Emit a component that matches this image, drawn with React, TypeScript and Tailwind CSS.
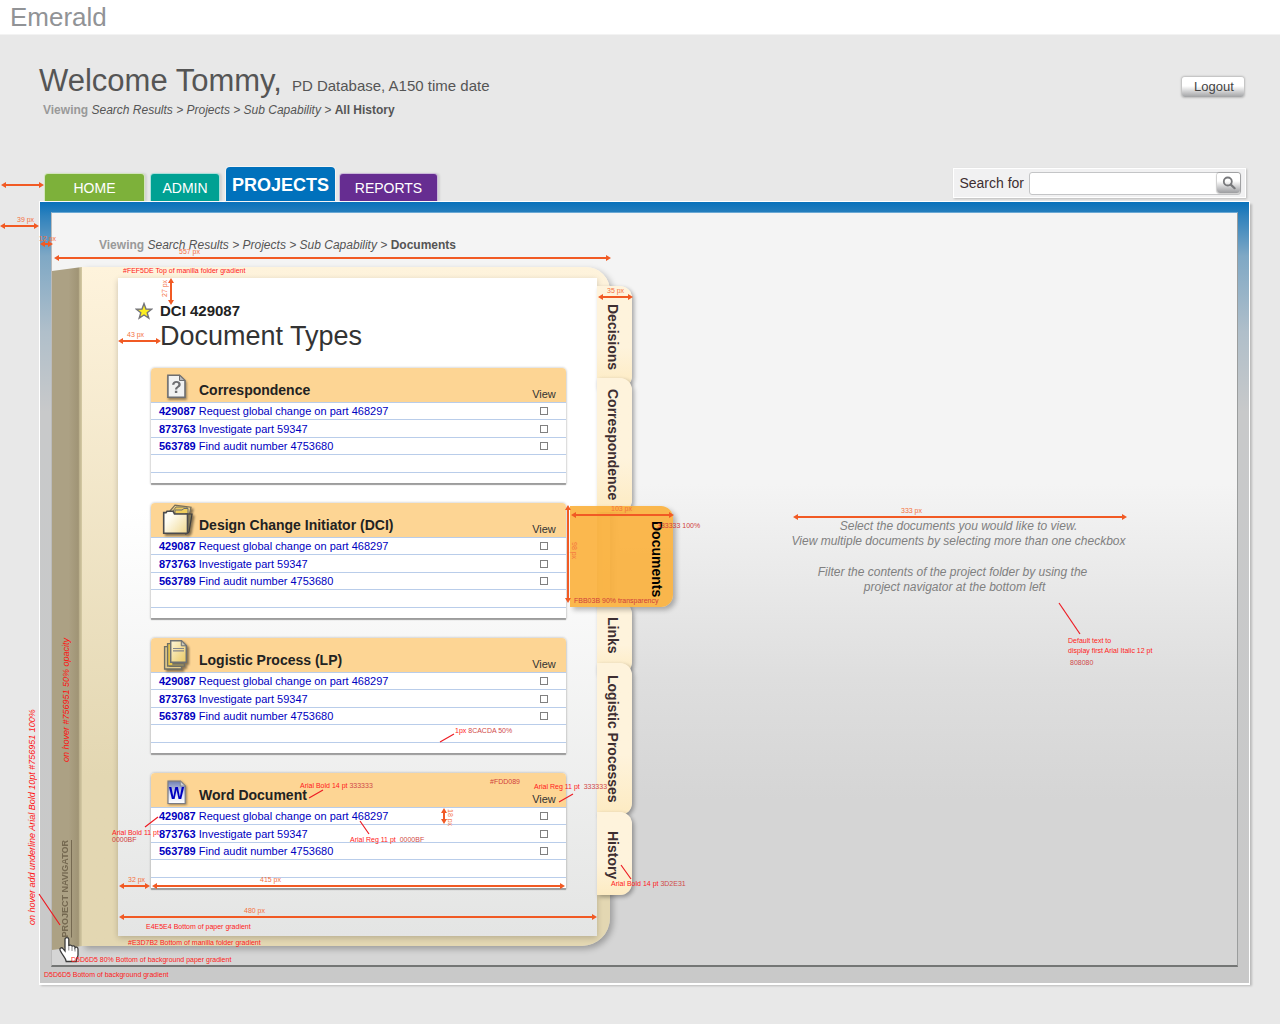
import React from "react";

const documents = [
  { id: "429087", title: "Request global change on part 468297" },
  { id: "873763", title: "Investigate part 59347" },
  { id: "563789", title: "Find audit number 4753680" },
];

function StarIcon() {
  return (
    <svg className="h-[18px] w-[18px] shrink-0" viewBox="0 0 18 18" aria-hidden="true">
      <path
        d="M9 1.6 L11 7 L16.6 7.2 L12.2 10.7 L13.8 16.2 L9 13 L4.2 16.2 L5.8 10.7 L1.4 7.2 L7 7 Z"
        fill="#fcee21"
        stroke="#75757a"
        strokeWidth="1.4"
      />
    </svg>
  );
}

function QuestionIcon() {
  return (
    <svg className="h-9 w-9 drop-shadow-[1px_2px_1px_#00000066]" viewBox="0 0 36 36" aria-hidden="true">
      <path d="M8.9 8.2 H20.5 L26 13.5 V30.3 H8.9 Z" fill="#f1f2f2" stroke="#6d6e71" strokeWidth="1.6" />
      <path d="M20.5 8.2 V13.5 H26 Z" fill="#b5b6b8" stroke="#6d6e71" strokeWidth="1" />
      <text x="17.4" y="26" textAnchor="middle" fontSize="17" fontWeight="bold" fill="#6d6e71" fontFamily="Liberation Sans">?</text>
    </svg>
  );
}

function FoldersIcon() {
  return (
    <svg className="h-9 w-9 drop-shadow-[2px_2px_1px_#00000077]" viewBox="0 0 36 36" aria-hidden="true">
      <defs>
        <linearGradient id="folderFace" x1="0" x2="1" y1="0.2" y2="1">
          <stop offset="0.2" stopColor="#fffdf4" />
          <stop offset="1" stopColor="#efd78d" />
        </linearGradient>
      </defs>
      <path d="M11 9 L16 3.2 L32 5.2 L30 14 H11 Z" fill="#ead08b" stroke="#77705c" strokeWidth="1.2" />
      <path d="M14 9 L17 5 H28 L29 13 H14 Z" fill="#e9c963" stroke="#77705c" strokeWidth="1" />
      <path d="M16 8 H23 L25 6.5 H29 V12 H16 Z" fill="#f0cf5d" stroke="#6c6e70" strokeWidth="1" />
      <path d="M27 12 H33 L30 30 L27 32 Z" fill="#817858" stroke="#3d3d3d" strokeWidth="1.2" />
      <path d="M4.7 31.3 V10.6 H7 L8 9.2 H14 L15.5 12 H28.5 V31.3 Z" fill="url(#folderFace)" stroke="#4b4b4d" strokeWidth="1.6" />
    </svg>
  );
}

function PagesIcon() {
  return (
    <svg className="h-9 w-9 drop-shadow-[2px_2px_1px_#00000077]" viewBox="0 0 36 36" aria-hidden="true">
      <defs>
        <linearGradient id="pageFace" x1="0" x2="1" y1="0" y2="1">
          <stop offset="0" stopColor="#fdf5d8" />
          <stop offset="1" stopColor="#eac963" />
        </linearGradient>
      </defs>
      <path d="M5.6 9.6 H11 V29.4 H22.5 V32 H5.6 Z" fill="#e6cd8c" stroke="#6f6f66" strokeWidth="1.4" />
      <path d="M8.6 6.6 H14 V27 H25.4 V29 H8.6 Z" fill="#ecc84c" stroke="#6f6f66" strokeWidth="1.4" />
      <path d="M11.7 3.7 H22.5 L27.3 8.8 V25.3 H11.7 Z" fill="url(#pageFace)" stroke="#6d7072" strokeWidth="1.5" />
      <path d="M22.3 3.7 V8.8 H27.3 Z" fill="#c9c8b8" stroke="#6d7072" strokeWidth="1" />
      <path d="M14 11.5 H25 M14 13.8 H25" stroke="#85868a" strokeWidth="1.2" />
    </svg>
  );
}

function WordIcon() {
  return (
    <svg className="h-9 w-9 drop-shadow-[1px_1px_1px_#00000066]" viewBox="0 0 36 36" aria-hidden="true">
      <defs>
        <linearGradient id="wordFace" x1="0" x2="0" y1="0" y2="1">
          <stop offset="0" stopColor="#6f7fb4" />
          <stop offset="0.6" stopColor="#dfe4f4" />
          <stop offset="1" stopColor="#ffffff" />
        </linearGradient>
      </defs>
      <path d="M9 9.2 H21.3 L26.2 14 V31.5 H9 Z" fill="url(#wordFace)" stroke="#7a7c86" strokeWidth="1.2" />
      <path d="M21.3 9 V14 H26.4 Z" fill="#cfcfd4" stroke="#7a7c86" strokeWidth="0.8" />
      <text x="17.6" y="26.5" textAnchor="middle" fontSize="16" fontWeight="bold" fill="#0000bf" fontFamily="Liberation Sans">W</text>
    </svg>
  );
}

function HandCursor() {
  return (
    <svg className="pointer-events-none absolute bottom-[-18px] left-[6px] h-7 w-6" viewBox="0 0 24 28" aria-hidden="true">
      <path
        d="M7 3.2 C7 1 10.8 1 10.8 3.2 V10 C11 8.6 14 8.8 14 10.6 C14.4 9.4 17 9.6 17 11.6 C17.6 10.6 20 11 20 13 V19 C20 21 18.4 22 18.2 25.5 H8.2 C8 22 4.5 19.6 2.2 14.6 C1 12 3.6 11 5 12.6 L7 15 Z"
        fill="#fff"
        stroke="#3a3a3a"
        strokeWidth="1.3"
      />
      <path d="M10.8 10 V14.5 M14 11 V15 M17 12 V15.5" stroke="#77787a" strokeWidth="0.9" />
    </svg>
  );
}

function DocumentCard({ title, icon }: { title: string; icon: React.ReactNode }) {
  return (
    <table className="w-full table-fixed border-separate border-spacing-0 rounded-t bg-white shadow-[0_2px_1px_#9c9c9c,0_0_2px_1px_#00000022]">
      <thead>
        <tr>
          <th scope="col" className="h-[34px] rounded-tl bg-[#fdd594] p-0 text-left">
            <div className="flex h-[34px] items-center pl-2">
              {icon}
              <span className="pt-[10px] pl-1 text-[14px] leading-5 font-bold text-[#222]">{title}</span>
            </div>
          </th>
          <th scope="col" className="w-11 rounded-tr bg-[#fdd594] p-0 align-bottom text-[11px] leading-4 font-normal text-[#333]">
            View
          </th>
        </tr>
      </thead>
      <tbody>
        {documents.map((doc) => (
          <tr key={doc.id} className="h-[17px] even:h-[18px]">
            <td className="border-t border-[#b9cdea] p-0 pl-2 text-[11px] leading-4 text-[#0000bf]">
              <a href="#">
                <b>{doc.id}</b> {doc.title}
              </a>
            </td>
            <td className="border-t border-[#b9cdea] p-0">
              <input
                type="checkbox"
                aria-label={"View " + doc.title}
                className="mx-auto block h-2 w-2 appearance-none border border-[#808080] bg-white checked:bg-[#0071bc]"
              />
            </td>
          </tr>
        ))}
        <tr className="h-[18px]">
          <td colSpan={2} className="border-t border-[#b9cdea] p-0" />
        </tr>
        <tr className="h-[11px]">
          <td colSpan={2} className="border-t border-[#b9cdea] p-0" />
        </tr>
      </tbody>
    </table>
  );
}

function Breadcrumb({ current }: { current: string }) {
  return (
    <p className="text-[12px] leading-[18px] text-[#555]">
      <b className="text-[#999]">Viewing</b>{" "}
      <i>
        <a href="#">Search Results</a> &gt; <a href="#">Projects</a> &gt; <a href="#">Sub Capability</a> &gt;
      </i>{" "}
      <b>{current}</b>
    </p>
  );
}

function Arrow({ x1, y1, x2, y2 }: { x1: number; y1: number; x2: number; y2: number }) {
  const flat = y1 === y2;
  return (
    <g stroke="#f15a24" fill="#f15a24">
      <line x1={x1 + (flat ? 3 : 0)} y1={y1 + (flat ? 0 : 3)} x2={x2 - (flat ? 3 : 0)} y2={y2 - (flat ? 0 : 3)} strokeWidth="2" />
      {flat ? (
        <path stroke="none" d={`M${x1} ${y1} l5 -3 v6 Z M${x2} ${y2} l-5 -3 v6 Z`} />
      ) : (
        <path stroke="none" d={`M${x1} ${y1} l-3 5 h6 Z M${x2} ${y2} l-3 -5 h6 Z`} />
      )}
    </g>
  );
}

function Dimensions() {
  return (
    <svg
      className="pointer-events-none absolute top-0 left-0 z-20 h-[1024px] w-[720px] font-['Liberation_Sans',Arial,sans-serif] text-[7px]"
      viewBox="0 0 720 1024"
    >
      <Arrow x1={1} y1={185} x2={44} y2={185} />
      <Arrow x1={0} y1={226} x2={39} y2={226} />
      <Arrow x1={40} y1={244} x2={53} y2={244} />
      <Arrow x1={54} y1={258} x2={611} y2={258} />
      <Arrow x1={118} y1={341} x2={161} y2={341} />
      <Arrow x1={171} y1={278} x2={171} y2={305} />
      <Arrow x1={598} y1={297} x2={633} y2={297} />
      <Arrow x1={568} y1={505} x2={568} y2={603} />
      <Arrow x1={571} y1={515} x2={674} y2={515} />
      <Arrow x1={444} y1={808} x2={444} y2={824} />
      <Arrow x1={119} y1={886} x2={150} y2={886} />
      <Arrow x1={152} y1={886} x2={565} y2={886} />
      <Arrow x1={119} y1={917} x2={597} y2={917} />
      <path
        d="M440 742 L454 734 M309 798 L323 790 M559 802 L573 794 M145 827 L158 817 M360 821 L369 834 M621 865 L631 879 M39 894 L60 925"
        stroke="#ed1c24"
        strokeWidth="1.2"
        fill="none"
      />
      <g fill="#f4713f">
        <text x="17" y="222">39 px</text>
        <text x="39" y="241">12 px</text>
        <text x="179" y="254">557 px</text>
        <text x="127" y="337">43 px</text>
        <text transform="translate(167 297) rotate(-90)">27 px</text>
        <text x="607" y="293">35 px</text>
        <text x="611" y="511">103 px</text>
        <text transform="translate(572 542) rotate(90)">98 px</text>
        <text transform="translate(448 809) rotate(90)">18 px</text>
        <text x="128" y="882">32 px</text>
        <text x="260" y="882">415 px</text>
        <text x="244" y="913">480 px</text>
      </g>
      <g fill="#ff2020">
        <text x="123" y="273">#FEF5DE Top of manilla folder gradient</text>
        <text x="455" y="733">1px <tspan fill="#d04a4a">8CACDA 50%</tspan></text>
        <text x="300" y="788">Arial Bold 14 pt <tspan fill="#d04a4a">333333</tspan></text>
        <text x="534" y="789">Arial Reg 11 pt&nbsp; <tspan fill="#d04a4a">333333</tspan></text>
        <text x="112" y="835">Arial Bold 11 pt</text>
        <text x="350" y="842">Arial Reg 11 pt&nbsp; <tspan fill="#d04a4a">0000BF</tspan></text>
        <text x="611" y="886">Arial Bold 14 pt <tspan fill="#d04a4a">3D2E31</tspan></text>
        <text x="146" y="929">E4E5E4 Bottom of paper gradient</text>
        <text x="128" y="945">#E3D7B2 Bottom of manilla folder gradient</text>
        <text x="71" y="962">D5D6D5 80% Bottom of background paper gradient</text>
        <text x="44" y="977">D5D6D5 Bottom of background gradient</text>
      </g>
      <g fill="#d0403a">
        <text x="657" y="528">333333 100%</text>
        <text x="574" y="603">FBB03B 90% transparency</text>
        <text x="490" y="784">#FDD089</text>
        <text x="112" y="842">0000BF</text>
      </g>
      <g fill="#ff1010" fontSize="9" fontStyle="italic">
        <text transform="translate(35 925) rotate(-90)">on hover add underline Arial Bold 10pt #756951 100%</text>
        <text transform="translate(69 762) rotate(-90)">on hover #756951 50% opacity</text>
      </g>
    </svg>
  );
}

const sideTab =
  "relative flex w-[35px] items-center justify-center rounded-r-xl bg-linear-to-b from-[#fef3dc] from-60% to-[#fdebc2] pr-1 text-[14px] leading-[18px] font-bold text-[#3d2e31] shadow-[2px_2px_4px_#00000055] [writing-mode:vertical-rl]";
const topTab =
  "flex h-7 items-center justify-center rounded-t-sm border border-b-0 border-[#ffffffaa] pt-px text-[14px] leading-4 text-white shadow-[2px_0_2px_#00000018]";

export default function App() {
  return (
    <div className="relative min-h-screen overflow-x-hidden bg-[#e8e8e8] pb-9 font-['Liberation_Sans',Arial,sans-serif]">
      <div className="border-b border-[#f3f3f3] bg-white pl-[10px]">
        <p className="text-[26px] leading-[34px] text-[#919396]">Emerald</p>
      </div>

      <header className="flex items-start justify-between pt-[30px] pr-9 pl-[39px]">
        <div>
          <h1 className="flex items-baseline gap-[10px] text-[31px] leading-8 text-[#555]">
            Welcome Tommy,
            <span className="text-[15px] leading-4">PD Database, A150 time date</span>
          </h1>
          <div className="mt-1 pl-1">
            <Breadcrumb current="All History" />
          </div>
        </div>
        <button
          type="button"
          className="mt-3 h-5 w-[62px] rounded-[3px] bg-linear-to-b from-white from-45% to-[#a2a3a5] pl-[2px] text-[13px] leading-5 text-[#444] shadow-[0_0_2px_1px_#00000033]"
        >
          Logout
        </button>
      </header>

      <div className="mt-12 flex items-end justify-between pr-[34px] pl-[44px]">
        <nav className="flex items-end">
          <a href="#" className={topTab + " w-[101px] bg-[#7db13a]"}>HOME</a>
          <a href="#" className={topTab + " ml-[5px] w-[70px] bg-[#00a193]"}>ADMIN</a>
          <a
            href="#"
            className="ml-[6px] flex h-[34px] w-[109px] items-center justify-center rounded-t bg-[#0071bc] pt-[2px] text-[18px] leading-5 font-bold text-white shadow-[0_0_0_1px_#f4f4f4]"
          >
            PROJECTS
          </a>
          <a href="#" className={topTab + " ml-1 w-[99px] bg-[#662d91]"}>REPORTS</a>
        </nav>
        <form
          className="mb-[3px] flex h-[30px] items-center border border-white bg-[#f1f1f2] pr-1 pl-[5px] shadow-[1px_1px_2px_#00000033]"
          onSubmit={(e) => e.preventDefault()}
        >
          <label htmlFor="search" className="text-[14px] leading-4 text-[#3d2e31]">Search for</label>
          <div className="ml-[5px] flex h-[23px] w-[212px] items-center rounded-[3px] border border-[#c4c5c7] bg-white">
            <input id="search" type="text" className="h-full min-w-0 flex-1 bg-transparent px-1 text-[13px] outline-none" />
            <button
              type="submit"
              aria-label="Search"
              className="flex h-5 w-[23px] items-center justify-center rounded-[3px] bg-linear-to-b from-white from-40% to-[#9c9da0] shadow-[0_0_1px_1px_#00000033]"
            >
              <svg className="h-[14px] w-[14px]" viewBox="0 0 14 14" aria-hidden="true">
                <circle cx="5.8" cy="5.5" r="4" fill="none" stroke="#77787b" strokeWidth="1.8" />
                <path d="M8.8 8.6 L12.6 12.2" stroke="#77787b" strokeWidth="2.2" strokeLinecap="round" />
              </svg>
            </button>
          </div>
        </form>
      </div>

      <main className="mr-[30px] ml-[39px] border-x border-t border-white bg-[linear-gradient(180deg,#0871bb_0px,#2f82bd_14px,#7fa8c5_54px,#b0bfca_130px,#c8c9ca_210px,#c9c9c9_100%)] px-[11px] pt-[10px] pb-4 shadow-[0_2px_0_#fff,2px_3px_2px_#00000033]">
        <div className="flex border border-t-[#6aa8d4] border-r-[#9b9d9d] border-b-2 border-l-[#bbb] border-b-[#747675] bg-[linear-gradient(180deg,#f4f4f4_0%,#f4f4f4_36%,#dedede_62%,#d5d5d5_78%,#d5d5d5_100%)] pt-[23px] pb-[19px]">
          <section>
            <div className="pl-[47px]">
              <Breadcrumb current="Documents" />
            </div>
            <div className="mt-[13px] flex items-stretch">
              <div className="relative w-[30px] shrink-0">
                <div className="-mb-1 flex h-[calc(100%+4px)] items-end justify-center bg-[linear-gradient(90deg,#aca184_0%,#aca184_55%,#a09475_88%,#b8ad8a_90%,#d6cba5_100%)] pr-1 pb-3 [clip-path:polygon(0_4px,100%_0,100%_calc(100%-4px),0_100%)]">
                  <a
                    href="#"
                    className="rotate-180 text-[9px] leading-[10px] font-bold text-[#756951] underline underline-offset-1 [writing-mode:vertical-rl]"
                  >
                    PROJECT NAVIGATOR
                  </a>
                </div>
                <HandCursor />
              </div>
              <div className="rounded-tr-[24px] rounded-br-[28px] bg-linear-to-b from-[#fef3dc] to-[#e3d7b2] to-75% pt-[11px] pr-[13px] pb-[10px] pl-9 shadow-[3px_3px_6px_#00000044]">
                <div className="w-[479px] bg-linear-to-b from-white from-35% to-[#e4e5e4] pt-6 pr-[31px] pb-12 pl-[33px] shadow-[0_2px_6px_#00000033]">
                  <div className="-ml-4 flex items-center">
                    <StarIcon />
                    <p className="ml-[7px] text-[15px] leading-[18px] font-bold text-[#222]">DCI 429087</p>
                  </div>
                  <h2 className="pl-[9px] text-[27px] leading-8 text-[#333]">Document Types</h2>
                  <div className="mt-4 flex flex-col gap-5">
                    <DocumentCard title="Correspondence" icon={<QuestionIcon />} />
                    <DocumentCard title="Design Change Initiator (DCI)" icon={<FoldersIcon />} />
                    <DocumentCard title="Logistic Process (LP)" icon={<PagesIcon />} />
                    <DocumentCard title="Word Document" icon={<WordIcon />} />
                  </div>
                </div>
              </div>
              <nav className="relative z-10 -ml-[13px] flex w-[76px] flex-col pt-[19px]">
                <button type="button" className={sideTab + " h-[102px]"}>Decisions</button>
                <button type="button" className={sideTab + " -mt-[10px] h-[134px]"}>Correspondence</button>
                <button type="button" className={sideTab + " mt-[90px] h-[72px] pb-[6px]"}>Links</button>
                <button type="button" className={sideTab + " -mt-[11px] h-[152px]"}>Logistic Processes</button>
                <button type="button" className={sideTab + " -mt-[3px] h-[83px] pt-1"}>History</button>
                <button
                  type="button"
                  className="absolute top-[239px] -left-[27px] flex h-[101px] w-[103px] items-center justify-center rounded-r-xl bg-[#fbb03b]/90 pt-[5px] pl-[70px] text-[14px] leading-[18px] font-bold text-black shadow-[3px_3px_5px_#00000044] [writing-mode:vertical-rl]"
                >
                  Documents
                </button>
              </nav>
            </div>
          </section>
          <section className="flex flex-1 justify-center pt-[283px] pl-[7px]">
            <div className="relative h-fit text-center text-[12px] leading-[15px] text-[#808080] italic">
              <p>Select the documents you would like to view.</p>
              <p>View multiple documents by selecting more than one checkbox</p>
              <p className="mt-4 pr-3">Filter the contents of the project folder by using the</p>
              <p className="pr-2">project navigator at the bottom left</p>
              <svg
                className="pointer-events-none absolute -top-[14px] left-0 h-[165px] w-[370px] text-[7px] not-italic"
                viewBox="0 0 370 165"
              >
                <Arrow x1={1} y1={12} x2={335} y2={12} />
                <path d="M267 98 L288 129" stroke="#ed1c24" strokeWidth="1.2" />
                <text x="109" y="8" fill="#f4713f">333 px</text>
                <text x="276" y="138" fill="#ff2020">Default text to</text>
                <text x="276" y="148" fill="#ff2020">display first Arial Italic 12 pt</text>
                <text x="278" y="160" fill="#d04a4a">808080</text>
              </svg>
            </div>
          </section>
        </div>
      </main>

      <Dimensions />
    </div>
  );
}
